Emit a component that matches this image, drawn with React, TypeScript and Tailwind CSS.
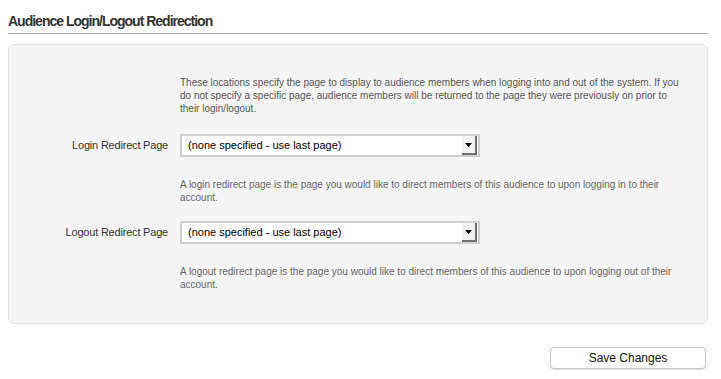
import React from 'react';

function PageSelect({ value }: { value: string }) {
  return (
    <div className="flex h-[23px] w-[300px] items-stretch border-2 border-[#d0d0d0] bg-white">
      <span className="flex flex-1 items-center pl-[6px] text-[11px] text-black">{value}</span>
      <div className="mr-[1px] flex w-[15px] items-center justify-center border-r-2 border-b-2 border-[#707070] bg-[#f4f4f4]">
        <svg width="7" height="4" viewBox="0 0 7 4">
          <polygon points="0,0 7,0 3.5,4" fill="#000" />
        </svg>
      </div>
    </div>
  );
}

function RedirectRow({ label, help }: { label: string; help: string }) {
  return (
    <>
      <div className="mt-[19px] flex items-center">
        <label className="mr-[12px] w-[159px] text-right text-[11px] tracking-[-0.2px] text-[#333]">{label}</label>
        <PageSelect value="(none specified - use last page)" />
      </div>
      <p className="ml-[171px] mt-[21px] w-[508px] text-[10px] leading-[13px] text-[#666]">{help}</p>
    </>
  );
}

export default function App() {
  return (
    <div className="h-[379px] w-[721px] bg-white font-['Liberation_Sans',Arial,sans-serif]">
      <div className="ml-2 w-[700px]">
        <h2 className="border-b border-[#a8a8a8] pt-[13px] pb-1 text-[14px] font-bold leading-4 tracking-[-1px] text-[#333]">
          Audience Login/Logout Redirection
        </h2>

        <div className="mt-[10px] rounded-[6px] border border-[#e2e2e2] bg-[#f5f5f5] pt-[31px] pb-[32px]">
          <p className="ml-[171px] w-[508px] text-[10px] leading-[13px] text-[#555]">
            These locations specify the page to display to audience members when logging into and out of the
            system. If you do not specify a specific page, audience members will be returned to the page they were
            previously on prior to their login/logout.
          </p>

          <RedirectRow
            label="Login Redirect Page"
            help="A login redirect page is the page you would like to direct members of this audience to upon logging in to their account."
          />
          <div className="-mt-[2px]">
            <RedirectRow
              label="Logout Redirect Page"
              help="A logout redirect page is the page you would like to direct members of this audience to upon logging out of their account."
            />
          </div>
        </div>

        <div className="mt-[23px] flex justify-end pr-[2px]">
          <button className="h-[22px] w-[156px] rounded-[4px] border border-[#c6c6c6] bg-white text-[12px] text-[#111] shadow-[0_1px_1px_rgba(0,0,0,0.12)]">
            Save Changes
          </button>
        </div>
      </div>
    </div>
  );
}
